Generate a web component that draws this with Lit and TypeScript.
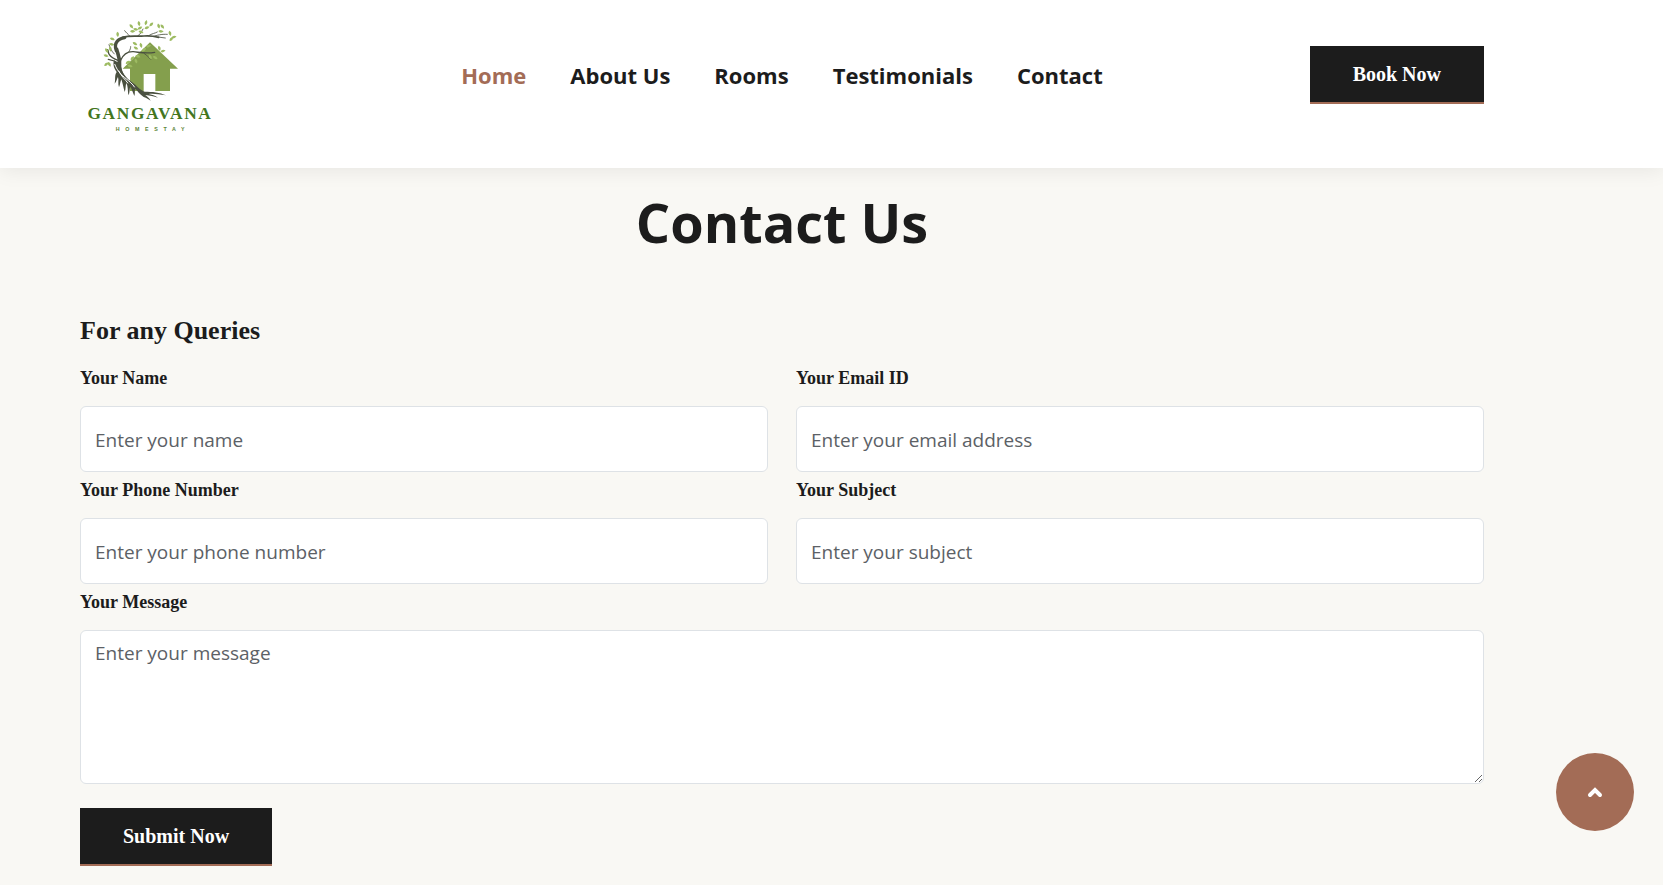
import { LitElement, html, css, svg } from "lit";
import { customElement } from "lit/decorators.js";

// Leaves of the logo tree: centre x, centre y, rotation in degrees.
const LEAVES: [number, number, number][] = [
  [184, 49, 50], [197, 58, 10], [207, 41, 80], [210, 54, -30],
  [228, 38, -75], [231, 53, -20], [244, 43, -45], [188, 64, 0],
  [266, 48, 75], [277, 50, 50], [273, 64, 5], [213, 66, 20],
  [300, 70, 75], [312, 81, -15], [304, 87, -50], [143, 73, 85], [127, 87, 20],
  [125, 103, 10], [110, 122, 60], [121, 117, 80], [108, 137, 20],
  [109, 163, -40], [118, 163, 60], [213, 106, 75], [222, 119, -40],
  [236, 108, -20], [198, 114, 30], [268, 115, 75], [279, 123, -15],
  [256, 143, 30], [241, 141, 60], [174, 157, -30], [187, 145, -50],
  [198, 153, 70], [204, 139, 20], [180, 168, 10], [195, 101, 30],
];

const logo = svg`
  <path fill="#849f4d" d="M240 97 L324 176 H300 V243 H256 V192 H221 V243 H180 V176 H158 Z" />
  <g fill="none" stroke="#4a5040" stroke-linecap="round" stroke-linejoin="round">
    <path stroke-width="10" d="M139 122 C130 98 144 87 164 83" />
    <path stroke-width="11" d="M140 118 C144 134 150 144 148 160 C146 178 150 188 158 198" />
    <path stroke-width="5" d="M158 82 C180 76 200 80 222 78 C240 76 254 79 266 82" />
    <path stroke-width="2.5" d="M264 81 L286 84 M203 78 C212 72 214 66 219 57 M236 77 C246 70 256 70 262 66 M180 79 C174 72 168 68 164 62 M250 79 C262 76 272 72 292 73" />
    <path stroke-width="4" d="M151 152 C160 132 172 124 190 125 C210 127 228 132 254 127" />
    <path stroke-width="2.5" d="M177 125 C181 118 182 114 182 110 M222 130 C232 137 236 142 242 148 M133 132 C124 124 120 112 117 104" />
    <path stroke-width="4" d="M144 151 C130 146 122 140 118 134 C114 129 116 124 113 119 M145 160 C132 151 122 149 115 148" />
  </g>
  <path fill="#4a5040" d="M132 150 C128 164 132 174 140 186 C133 196 137 206 134 221 C141 214 140 206 144 201
    C147 212 143 220 147 232 C151 222 151 214 154 208 C158 220 160 232 164 246 C168 238 166 226 169 219
    C174 228 173 240 175 256 C180 248 178 236 181 230 C186 238 188 246 193 258 C196 250 193 242 196 236
    C203 243 208 252 221 261 C230 264 236 268 242 272 C238 263 230 259 226 255 C240 256 252 260 264 263
    C256 257 244 254 236 252 C252 250 268 254 288 256 C270 247 246 245 224 245 C214 240 205 234 196 224
    C184 216 168 204 160 190 C153 178 153 164 154 148 C148 160 140 158 132 150 Z" />
  <path fill="none" stroke="#fff" stroke-width="3" d="M134 162 C143 186 156 196 168 206 C178 214 188 222 194 232 M146 182 C154 200 166 208 174 220" />
  <g fill="#9dbb62">
    ${LEAVES.map(
      ([x, y, a]) => svg`<path transform="translate(${x} ${y}) rotate(${a})" d="M-8 0 Q-1 -8 8 0 Q-1 8 -8 0 Z" />`
    )}
  </g>
  <text class="brand" x="240" y="326" text-anchor="middle">GANGAVANA</text>
  <text class="tag" x="249" y="363" text-anchor="middle">HOMESTAY</text>
`;

@customElement("app-root")
export class AppRoot extends LitElement {
  static styles = css`
    :host {
      --ink: #1c1c1c;
      --accent: #a36c56;
      --paper: #f9f8f4;
      --line: #dee2e6;
      display: block;
      min-height: 100vh;
      background: var(--paper);
      color: var(--ink);
      font-family: "Open Sans", sans-serif;
    }
    * {
      box-sizing: border-box;
    }
    header,
    main {
      padding-left: 80px;
      padding-right: 179px;
    }
    header {
      position: relative;
      display: grid;
      grid-template-columns: 1fr auto 1fr;
      align-items: center;
      padding-top: 10px;
      padding-bottom: 28px;
      background: #fff;
      box-shadow: 0 2px 20px rgba(0, 0, 0, 0.08);
    }
    .logo {
      justify-self: start;
      display: block;
      line-height: 0;
    }
    .logo svg {
      width: 140px;
      height: 130px;
    }
    .brand {
      font: bold 52px "Liberation Serif", serif;
      letter-spacing: 5px;
      fill: #43761f;
    }
    .tag {
      font: bold 16px "Liberation Sans", sans-serif;
      letter-spacing: 17px;
      fill: #5b8436;
    }
    .links {
      display: flex;
      gap: 44px;
      margin: 0;
      padding: 0;
      list-style: none;
    }
    .links a {
      color: var(--ink);
      font-size: 22px;
      font-weight: 700;
      line-height: 32px;
      text-decoration: none;
      white-space: nowrap;
    }
    .links a.active {
      color: var(--accent);
    }
    .btn {
      justify-self: end;
      display: inline-block;
      padding: 14px 43px;
      border: 0;
      border-bottom: 2px solid var(--accent);
      background: var(--ink);
      color: #fff;
      font: 700 20px/28px "Liberation Serif", serif;
      text-decoration: none;
      white-space: nowrap;
      cursor: pointer;
    }
    h1 {
      margin: 0;
      padding: 18px 0 57px;
      font-size: 54px;
      line-height: 72px;
      font-weight: 700;
      text-align: center;
    }
    h2 {
      margin: 0 0 19px;
      font: 700 26px/32px "Liberation Serif", serif;
    }
    .fields {
      display: grid;
      grid-template-columns: 1fr 1fr;
      gap: 6px 28px;
      margin-bottom: 24px;
    }
    .field {
      display: flex;
      flex-direction: column;
      gap: 16px;
    }
    .wide {
      grid-column: 1 / -1;
    }
    label {
      font: 700 18px/24px "Liberation Serif", serif;
    }
    input,
    textarea {
      width: 100%;
      margin: 0;
      padding: 7px 14px 5px;
      border: 1px solid var(--line);
      border-radius: 6px;
      background: #fff;
      color: var(--ink);
      font: 400 19px/30px "Open Sans", sans-serif;
    }
    input {
      height: 66px;
    }
    textarea {
      display: block;
      height: 154px;
      resize: vertical;
    }
    ::placeholder {
      color: #5c6166;
      opacity: 1;
    }
    .top {
      position: fixed;
      right: 29px;
      bottom: 54px;
      display: grid;
      place-items: center;
      width: 78px;
      height: 78px;
      padding: 0;
      border: 0;
      border-radius: 50%;
      background: var(--accent);
      cursor: pointer;
    }
    @media (max-width: 1300px) {
      header,
      main {
        padding-left: 24px;
        padding-right: 24px;
      }
      .links {
        gap: 20px;
      }
    }
    @media (max-width: 900px) {
      header,
      .fields {
        grid-template-columns: 1fr;
      }
      .links {
        flex-wrap: wrap;
      }
    }
  `;

  private field(id: string, label: string, placeholder: string, type: string) {
    return html`<div class="field">
      <label for=${id}>${label}</label>
      <input id=${id} name=${id} type=${type} placeholder=${placeholder} />
    </div>`;
  }

  render() {
    const links = ["Home", "About Us", "Rooms", "Testimonials", "Contact"];
    return html`
      <header>
        <a class="logo" href="#home" aria-label="Gangavana Homestay">
          <svg viewBox="30 0 420 390">${logo}</svg>
        </a>
        <nav>
          <ul class="links">
            ${links.map(
              (l, i) => html`<li><a class=${i === 0 ? "active" : ""} href="#${l.toLowerCase().replace(" ", "-")}">${l}</a></li>`
            )}
          </ul>
        </nav>
        <a class="btn" href="#book">Book Now</a>
      </header>
      <main>
        <h1>Contact Us</h1>
        <form @submit=${(e: Event) => e.preventDefault()}>
          <h2>For any Queries</h2>
          <div class="fields">
            ${this.field("name", "Your Name", "Enter your name", "text")}
            ${this.field("email", "Your Email ID", "Enter your email address", "email")}
            ${this.field("phone", "Your Phone Number", "Enter your phone number", "tel")}
            ${this.field("subject", "Your Subject", "Enter your subject", "text")}
            <div class="field wide">
              <label for="message">Your Message</label>
              <textarea id="message" name="message" placeholder="Enter your message"></textarea>
            </div>
          </div>
          <button class="btn" type="submit">Submit Now</button>
        </form>
      </main>
      <button class="top" type="button" aria-label="Back to top" @click=${() => window.scrollTo({ top: 0 })}>
        <svg width="16" height="12" viewBox="0 0 16 12" fill="none" stroke="#fff" stroke-width="4" stroke-linecap="round">
          <path d="M3 9 L8 4 L13 9" />
        </svg>
      </button>
    `;
  }
}
